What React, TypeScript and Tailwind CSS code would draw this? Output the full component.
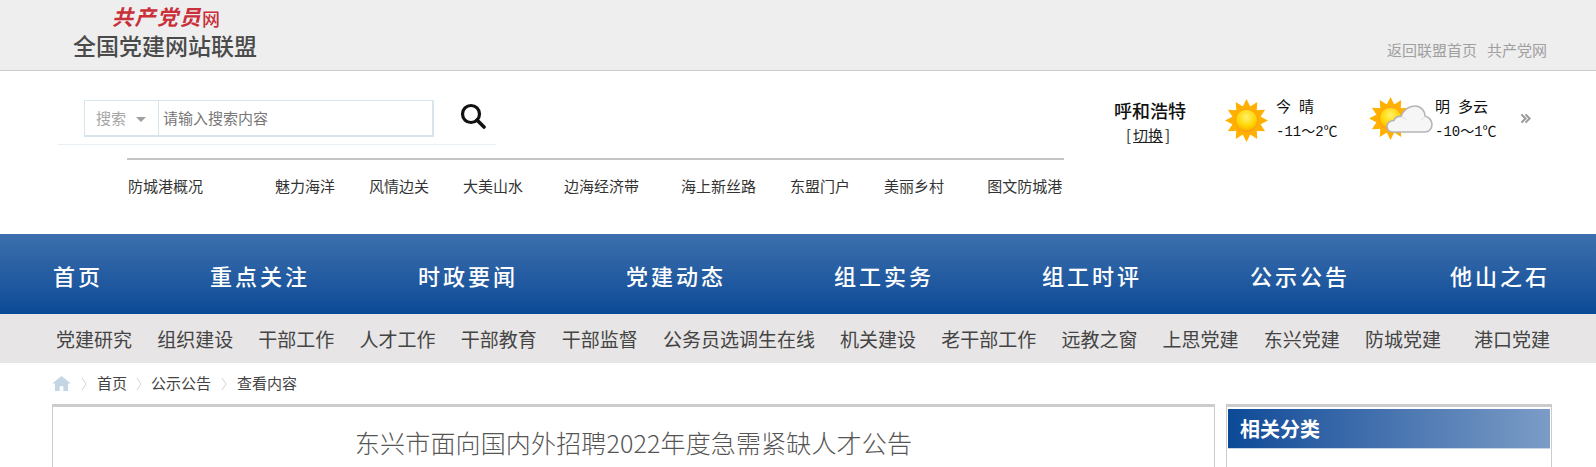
const cn = "font-['Microsoft_YaHei','Noto_Sans_CJK_SC',sans-serif]";
const mono = "font-['Liberation_Mono','Noto_Sans_CJK_SC',monospace]";

const mainNav = ["重点关注", "时政要闻", "党建动态", "组工实务", "组工时评", "公示公告"];
const secondNav = ["党建研究", "组织建设", "干部工作", "人才工作", "干部教育", "干部监督", "公务员选调生在线", "机关建设", "老干部工作", "远教之窗", "上思党建", "东兴党建", "防城党建"];

function Sun({ className, id }: { className?: string; id: string }) {
  const rays = Array.from({ length: 12 }, (_, i) => i * 30);
  return (
    <svg viewBox="0 0 44 44" className={className}>
      <defs>
        <radialGradient id={id} cx="50%" cy="35%" r="65%">
          <stop offset="0%" stopColor="#fff36a" />
          <stop offset="65%" stopColor="#ffd400" />
          <stop offset="100%" stopColor="#ffa200" />
        </radialGradient>
      </defs>
      {rays.map((r) => (
        <polygon key={r} points="17.5,9 22,0 26.5,9" fill="#ffb000" transform={`rotate(${r} 22 22)`} />
      ))}
      <circle cx="22" cy="22" r="15" fill="#ffb000" />
      <circle cx="22" cy="22" r="11.500" fill={`url(#${id})`} stroke="#ff9a1a" strokeWidth="1" />
    </svg>
  );
}

function Cloud({ className }: { className?: string }) {
  return (
    <svg viewBox="0 0 47 28" className={className}>
      <path d="M7 27C3 27 1 24 1 21.500 1 18 4 15.500 8 15.500c1-3 4-4.500 7-4C17 5 23 1 29 1c6 0 10 5 10 10 4 1 7 4.500 7 8.500 0 4-3 7.500-7 7.500Z" fill="#f6f6f6" stroke="#b5b5b5" strokeWidth="1.6" />
      <path d="M15 12c2 0 4 1 5 3M39 11c-1 2-2 3-4 4" fill="none" stroke="#dedede" strokeWidth="1" />
    </svg>
  );
}

function Sep({ className }: { className: string }) {
  return (
    <svg viewBox="0 0 6 14" className={`w-[6px] h-[14px] ${className}`}>
      <path d="M1 1l4 6-4 6" fill="none" stroke="#d4d4d4" strokeWidth="1" />
    </svg>
  );
}

export default function App() {
  return (
    <div className={`w-[1596px] h-[467px] overflow-hidden bg-white text-[#333] ${cn}`}>
      <header className="h-[71px] bg-[#eeeeee] border-b border-[#cccccc] flex justify-between pl-[73px] pr-[49px]">
        <div className="flex flex-col">
          <div className="ml-[39px] mt-[3px] h-[25px] flex items-end text-[#c9303a] leading-none">
            <span className="text-[21px] leading-[24px] italic font-bold tracking-[1.500px]">共产党员</span>
            <span className="text-[18px] leading-[19px] font-medium">网</span>
          </div>
          <div className="mt-[3px] text-[23px] leading-[28px] text-[#4a4a4a] font-medium">全国党建网站联盟</div>
        </div>
        <div className="self-end mb-[10px] text-[15px] leading-[20px] text-[#a0a0a0] flex gap-[10px]">
          <span>返回联盟首页</span>
          <span>共产党网</span>
        </div>
      </header>

      <section className="h-[163px] flex">
        <div className="w-[1082px] flex flex-col">
          <div className="ml-[58px] w-[438px] h-[74px] border-b border-[#e8f0f5] pl-[26px] pt-[29px] flex items-start">
            <div className="w-[350px] h-[37px] flex border border-[#d7e5ec] border-b-2 border-r-2 text-[15px]">
              <div className="w-[74px] shrink-0 border-r border-[#d7e5ec] flex items-center pl-[11px] text-[#a5a5a5] gap-[10px]">
                <span>搜索</span>
                <span className="w-0 h-0 border-x-[5px] border-x-transparent border-t-[5px] border-t-[#a0a0a0] mt-[2px]"></span>
              </div>
              <div className="flex-1 flex items-center pl-[4px] text-[#777]">请输入搜索内容</div>
            </div>
            <svg viewBox="0 0 26 26" className="w-[26px] h-[26px] ml-[26px] mt-[3px]">
              <circle cx="11" cy="11" r="8.500" fill="none" stroke="#111" strokeWidth="3.200" />
              <path d="M17 17l7 7" stroke="#111" strokeWidth="3.600" strokeLinecap="round" />
            </svg>
          </div>
          <div className="ml-[127px] mt-[13px] w-[937px] border-t-2 border-[#c4c4c4] pt-[16px] flex text-[15px] leading-[20px] text-[#333]">
            <span className="ml-[1px] mr-[72px]">防城港概况</span>
            <span className="mr-[34px]">魅力海洋</span>
            <span className="mr-[34px]">风情边关</span>
            <span className="mr-[41px]">大美山水</span>
            <span className="mr-[42px]">边海经济带</span>
            <span className="mr-[34px]">海上新丝路</span>
            <span className="mr-[34px]">东盟门户</span>
            <span className="mr-[43px]">美丽乡村</span>
            <span>图文防城港</span>
          </div>
        </div>

        <div className="flex-1 flex pt-[27px]">
          <div className="w-[143px] pl-[32px] flex flex-col items-start">
            <span className="text-[18px] leading-[24px] font-medium text-[#111]">呼和浩特</span>
            <span className="ml-[12px] mt-[1px] text-[15px] leading-[24px] text-[#222]">[<span className="underline mx-[2px]">切换</span>]</span>
          </div>
          <Sun id="sunA" className="w-[43px] h-[43px] mt-[1px]" />
          <div className="ml-[8px] -mt-[4px] w-[93px] text-[14px] text-[#111]">
            <div className="leading-[24px] text-[15px]">今<span className="ml-[8px]">晴</span></div>
            <div className={`leading-[24px] mt-[2px] ${mono} text-[14px]`}>-11～2℃</div>
          </div>
          <div className="relative w-[43px] h-[43px] -mt-[1px]">
            <Sun id="sunB" className="w-[43px] h-[43px]" />
            <Cloud className="absolute left-[17px] top-[8px] w-[47px] h-[28px]" />
          </div>
          <div className="ml-[23px] -mt-[4px] w-[85px] text-[14px] text-[#111]">
            <div className="leading-[24px] text-[15px]">明<span className="ml-[8px]">多云</span></div>
            <div className={`leading-[24px] mt-[2px] ${mono} text-[14px]`}>-10～1℃</div>
          </div>
          <svg viewBox="0 0 12 12" className="w-[11px] h-[11px] mt-[15px] text-[#9a9a9a]">
            <path d="M1.500 1.500 6 6l-4.500 4.500M6 1.500 10.500 6 6 10.500" fill="none" stroke="currentColor" strokeWidth="2.200" />
          </svg>
        </div>
      </section>

      <nav className="h-[80px] bg-gradient-to-b from-[#3c70ad] to-[#0a4a97] flex items-center pt-[2px] pl-[53px] text-white text-[22px] tracking-[3px] font-medium">
        <span className="mr-[107px]">首页</span>
        <div className="flex gap-[108px]">
          {mainNav.map((n) => <span key={n}>{n}</span>)}
        </div>
        <span className="ml-[100px]">他山之石</span>
      </nav>

      <nav className="h-[49px] bg-[#e7e5e6] flex items-center gap-[25.150px] pt-[2px] pl-[56px] text-[#444] text-[19px]">
        {secondNav.map((n) => <span key={n}>{n}</span>)}
        <span className="ml-[8px]">港口党建</span>
      </nav>

      <div className="h-[41px] flex items-center pl-[52px] text-[15px] text-[#444]">
        <svg viewBox="0 0 20 16" className="w-[19px] h-[15px]">
          <path d="M10 0 0 8h3v8h5v-5h4v5h5V8h3L10 0Z" fill="#c4d6e4" />
        </svg>
        <Sep className="mx-[10px]" />
        <span>首页</span>
        <Sep className="mx-[9px]" />
        <span>公示公告</span>
        <Sep className="mx-[10px]" />
        <span>查看内容</span>
      </div>

      <main className="flex pl-[52px]">
        <div className="w-[1163px] h-[100px] border-t-[3px] border-x border-[#cccccc] pt-[18px] text-center text-[25px] leading-[34px] tracking-[0.150px] font-light text-[#555]">
          东兴市面向国内外招聘2022年度急需紧缺人才公告
        </div>
        <aside className="ml-[11px] w-[326px] h-[100px] border-t-[3px] border-x border-[#cccccc]">
          <div className="mt-[2px] mx-[1px] h-[40px] border-b border-[#c5d5e6] bg-gradient-to-r from-[#0a4a97] to-[#7b9cc6] pl-[12px] flex items-center text-white text-[20px] font-bold">
            相关分类
          </div>
        </aside>
      </main>
    </div>
  );
}
